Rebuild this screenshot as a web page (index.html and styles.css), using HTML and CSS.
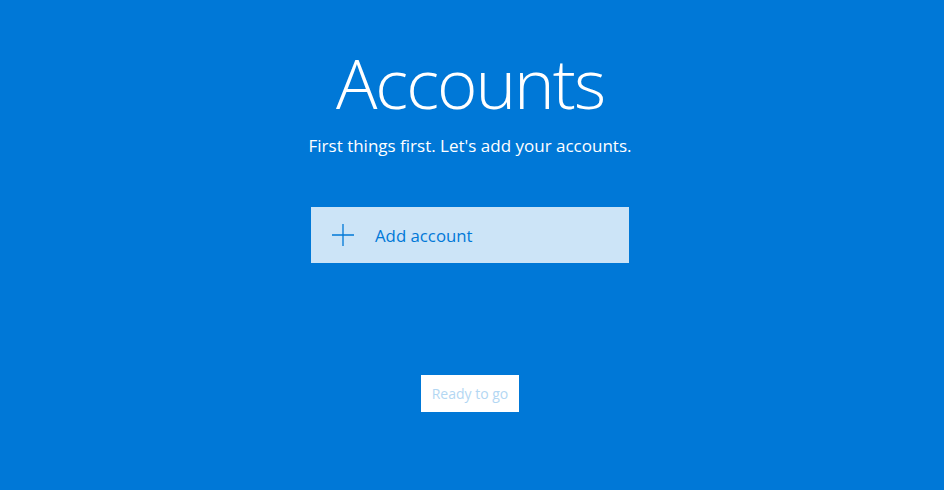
FILE: index.html
```html
<!DOCTYPE html>
<html lang="en">
<head>
<meta charset="utf-8">
<title>Accounts</title>
<link rel="stylesheet" href="styles.css">
</head>
<body>
<main class="page">
  <h1 class="title">Accounts</h1>
  <p class="subtitle">First things first. Let's add your accounts.</p>
  <button class="add-account" type="button">
    <svg class="plus" width="22" height="22" viewBox="0 0 22 22" aria-hidden="true">
      <path d="M11 0V22M0 11H22" stroke="#0078d7" stroke-width="1.3" fill="none"/>
    </svg>
    <span class="add-label">Add account</span>
  </button>
  <button class="ready" type="button">Ready to go</button>
</main>
</body>
</html>
```
FILE: styles.css
```css
html, body {
  margin: 0;
  padding: 0;
  height: 100%;
}
body {
  background: #0078d7;
  font-family: "Open Sans", "Noto Sans", sans-serif;
  color: #ffffff;
}
.page {
  display: flex;
  flex-direction: column;
  align-items: center;
  padding: 40px 4px 0 0;
}
.title {
  margin: 0;
  font-weight: 300;
  font-size: 69px;
  line-height: 84px;
  letter-spacing: -2px;
}
.subtitle {
  margin: 11px 0 0 0;
  font-size: 17px;
  line-height: 22px;
}
.add-account {
  margin-top: 50px;
  width: 318px;
  height: 56px;
  border: none;
  background: #cce4f7;
  display: flex;
  align-items: center;
  padding: 0 0 0 21px;
  gap: 21px;
  font-family: inherit;
  cursor: pointer;
}
.plus {
  flex: none;
}
.add-label {
  color: #0078d7;
  font-size: 16.8px;
}
.ready {
  margin-top: 112px;
  width: 98px;
  height: 37px;
  border: none;
  background: #ffffff;
  color: #b3d7f3;
  font-family: inherit;
  font-size: 14px;
  padding: 0;
}
```
